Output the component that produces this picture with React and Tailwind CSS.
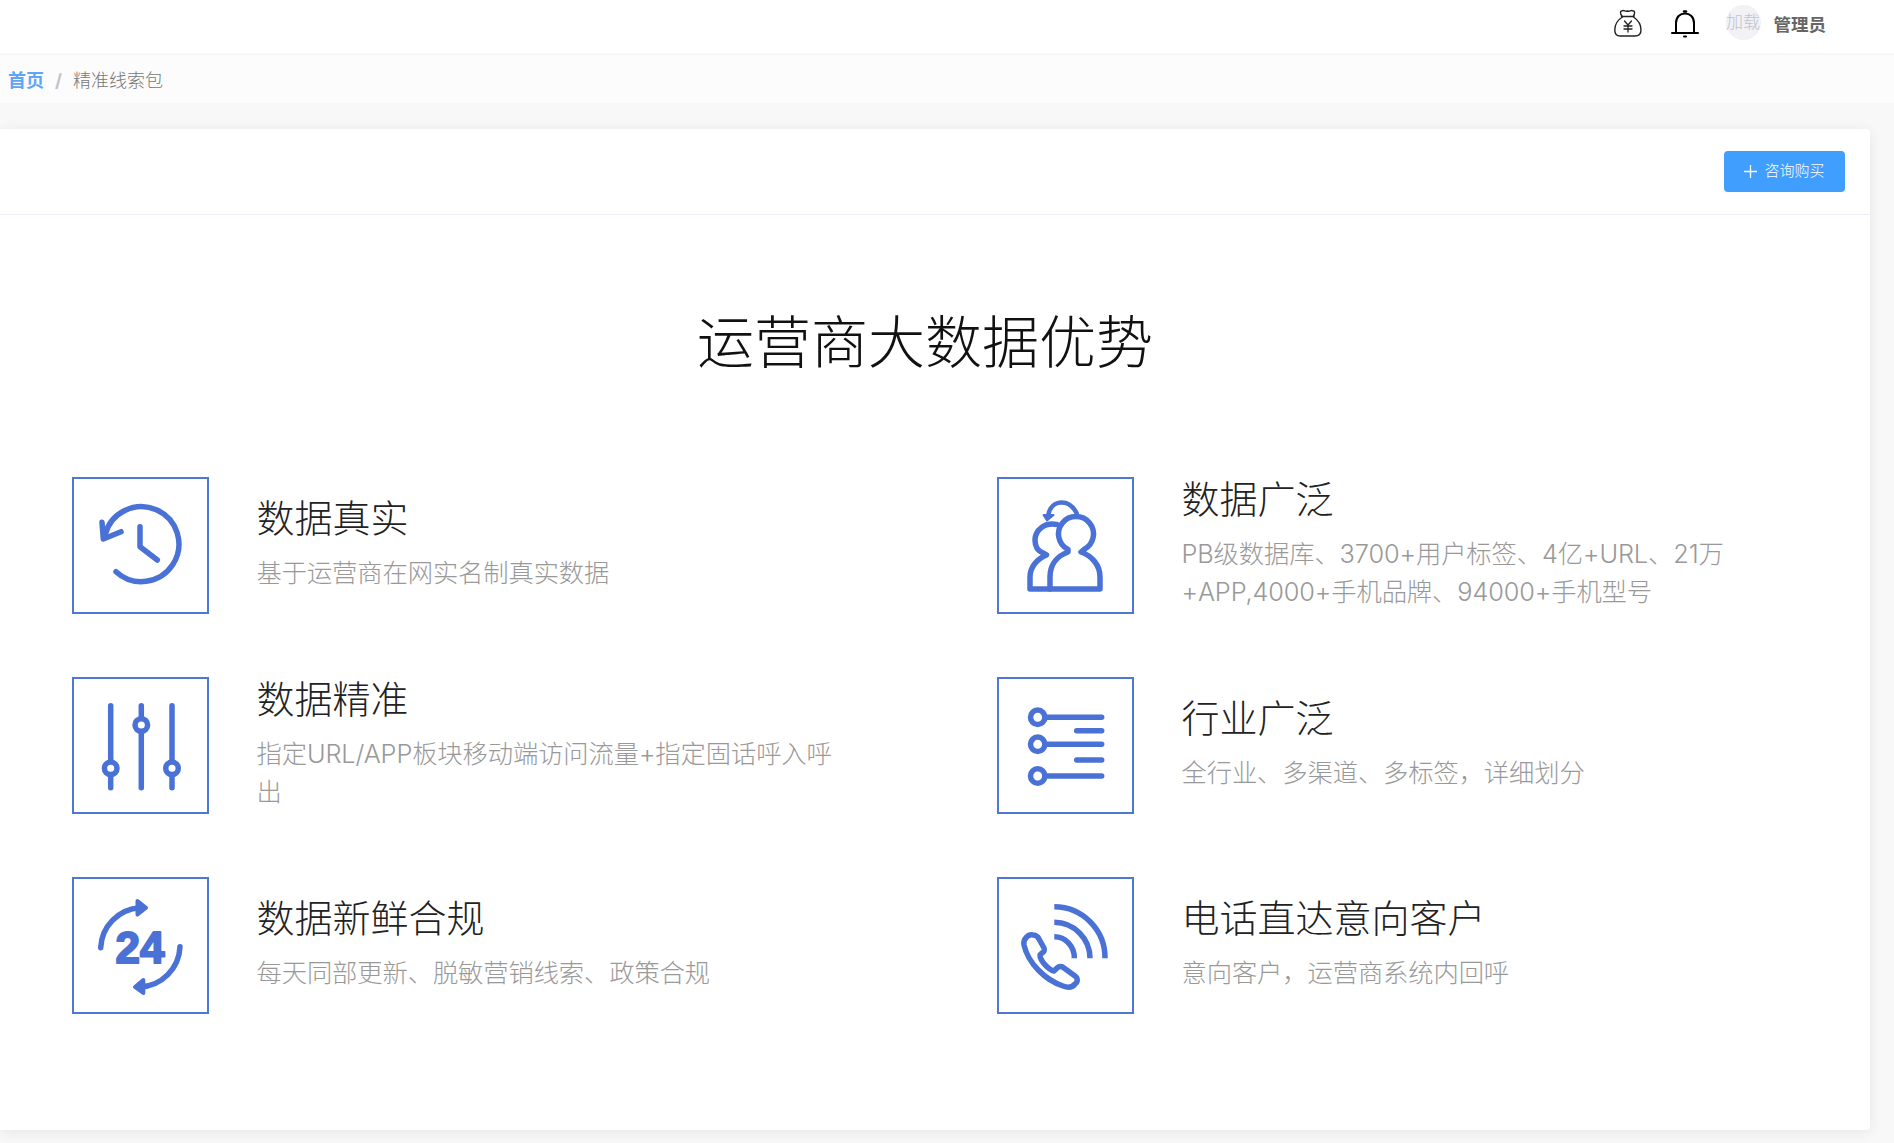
function Box({ children }) {
  return (
    <div className="w-[137px] h-[137px] shrink-0 border-2 border-[#4f77d6] bg-white">
      <svg viewBox="2 2 133 133" className="w-[133px] h-[133px]" fill="none" stroke="#4a72d6" strokeWidth="5" strokeLinecap="round" strokeLinejoin="round">
        {children}
      </svg>
    </div>
  );
}
const Clock = () => (
  <Box>
    <path d="M44 94.7A37.5 37.5 0 1 0 33 58" strokeWidth="5.5" />
    <path d="M30 45.3L31.3 62L49 54.7" strokeWidth="5.5" />
    <path d="M68 49.7V69.7L85.3 83" strokeWidth="5.5" />
  </Box>
);
const Sliders = () => (
  <Box>
    <g strokeWidth="5.5">
      <path d="M38.7 28.7V110.7M69.3 28.7V110.7M100 28.7V110.7" />
      <circle cx="38.7" cy="91.3" r="6.3" fill="#fff" />
      <circle cx="69.3" cy="48" r="6.3" fill="#fff" />
      <circle cx="100" cy="91.3" r="6.3" fill="#fff" />
    </g>
  </Box>
);
const Clock24 = () => (
  <Box>
    <path d="M28.7 70.7A42 42 0 0 1 68 30.7" strokeWidth="5.5" />
    <path d="M65.5 24L74 30.7L65.5 37.5Z" fill="#4a72d6" strokeWidth="4" />
    <path d="M108 69.7A42 42 0 0 1 68 110" strokeWidth="5.5" />
    <path d="M71.3 103L63 110L71.3 116Z" fill="#4a72d6" strokeWidth="4" />
    <text x="68" y="86" textAnchor="middle" fontFamily="'Liberation Sans', sans-serif" fontWeight="700" fontSize="44" fill="#4a72d6" strokeWidth="2">24</text>
  </Box>
);
const People = () => (
  <Box>
    <path d="M71 72.5A17.5 17.5 0 1 1 87 72.5L84 75C95 79 103 88 103 100V112H53V100C53 88 60 79 71 75Z" strokeWidth="5.5" />
    <path d="M59.7 47.5C47 45 38 54 38 63C38 69 41 74 46 76L49.5 78C40 82 33 90 33 100V112H53" strokeWidth="5.5" />
    <path d="M79.7 36.3C76 29 70 25.5 64.7 25.5C58 25.5 53 30 51.5 37" strokeWidth="4.5" />
    <path d="M46.5 38H56.5L50 43.5Z" fill="#4a72d6" strokeWidth="2" />
  </Box>
);
const List = () => (
  <Box>
    <g strokeWidth="5.5">
      <circle cx="40.7" cy="40.3" r="7.2" />
      <circle cx="40.7" cy="67.3" r="7.2" />
      <circle cx="40.7" cy="99" r="7.2" />
      <path d="M48 40.3H104.7M79.7 53.7H104.7M48 67.3H104.7M79.7 83H104.7M48 99H104.7" />
    </g>
  </Box>
);
const Phone = () => (
  <Box>
    <g strokeWidth="5.5" strokeLinecap="butt">
      <path d="M57.3 29.7A51 51 0 0 1 108 81.3" />
      <path d="M57.3 45.3A36 36 0 0 1 93 81.3" />
      <path d="M57.3 59.7A20 21 0 0 1 77.3 81.3" />
    </g>
    <path d="M27 68C26 62 31 57 36 58C39 58 41 60 42 62L47 71C48 73 47 75 45 76L43 78C43 84 52 93 57 94L60 91C62 89 65 89 67 91L78 99C81 101 81 105 78 107C75 111 71 111 66 109C48 103 31 86 27 68Z" strokeWidth="5.5" />
  </Box>
);
function Feature({ icon, title, desc }) {
  return (
    <div className="flex items-center gap-[47.5px] h-[137px]">
      {icon}
      <div className="w-[590px] -mt-[6px]">
        <div className="text-[38px] leading-[50px] font-light text-[#222]">{title}</div>
        <div className="mt-[11px] text-[25.3px] leading-[38px] font-light tracking-[-0.1px] text-[#999]">{desc}</div>
      </div>
    </div>
  );
}
const items = [
  [<Clock />, "数据真实", "基于运营商在网实名制真实数据"],
  [<People />, "数据广泛", "PB级数据库、3700+用户标签、4亿+URL、21万+APP,4000+手机品牌、94000+手机型号"],
  [<Sliders />, "数据精准", "指定URL/APP板块移动端访问流量+指定固话呼入呼出"],
  [<List />, "行业广泛", "全行业、多渠道、多标签，详细划分"],
  [<Clock24 />, "数据新鲜合规", "每天同部更新、脱敏营销线索、政策合规"],
  [<Phone />, "电话直达意向客户", "意向客户，运营商系统内回呼"],
];
export default function App() {
  return (
    <div className="w-[1894px] h-[1143px] overflow-hidden bg-[#f8f8f8] font-['Inter','Noto_Sans_CJK_SC',sans-serif]">
      <header className="h-[55px] bg-white border-b-2 border-[#f6f6f6] flex items-center justify-end">
        <svg viewBox="0 0 28 28" className="w-[28px] h-[28px] mr-[29px] -mt-[7px]" fill="none" stroke="#222" strokeWidth="1.4" strokeLinejoin="round" strokeLinecap="round">
          <path d="M8 7C6 5 6 1.5 8 2C10 0.5 11 3 13.5 2C16 3 17 0.5 19 2C21 1.5 21 5 19.5 7" />
          <path d="M7.5 7.5H20" />
          <path d="M8.5 8C3.5 11 0.8 16 0.8 21C0.8 25 3 27 6 27H21C24.5 27 27 25 27 21C27 16 24 11 19.5 8" />
          <path d="M10.5 12L14 16L17.5 12M14 16V23M10 17H18M10 20H18" strokeWidth="1.3" />
        </svg>
        <svg viewBox="0 0 28 28" className="w-[28px] h-[28px] mr-[27px] -mt-[5px]" fill="none" stroke="#000" strokeWidth="2" strokeLinecap="round">
          <path d="M5 23V13C5 7 9 3.5 14 3.5C19 3.5 23 7 23 13V23" />
          <path d="M1 23H27" />
          <path d="M13 1.5H15" strokeWidth="2.5" />
          <path d="M13 26.5H15" strokeWidth="2" />
        </svg>
        <div className="w-[35px] h-[35px] -mt-[8px] rounded-full bg-[#f1f1f6] flex items-center justify-center text-[17px] text-[#c0c4cc] whitespace-nowrap font-light">加载</div>
        <div className="ml-[13px] mr-[68px] -mt-[3px] text-[17.5px] font-bold text-[#666]">管理员</div>
      </header>
      <nav className="h-[48px] bg-[#fcfcfc] flex items-center pl-[8px] text-[18px] pt-[2px]">
        <span className="font-bold text-[#5fa5f5]">首页</span>
        <span className="mx-[11px] text-[#c0c4cc] font-bold">/</span>
        <span className="text-[#777] font-light">精准线索包</span>
      </nav>
      <main className="w-[1870px] h-[1001px] mt-[26px] bg-white rounded-r-[4px] shadow-[0_2px_14px_rgba(0,0,0,0.08)]">
        <div className="h-[86px] border-b border-[#ebeef5] flex items-center justify-end pr-[25px]">
          <button className="w-[121px] h-[41px] rounded-[4px] bg-[#409eff] text-white text-[15px] flex items-center justify-center font-light">
            <svg viewBox="0 0 14 14" className="w-[13px] h-[13px] mr-[7px]" stroke="#fff" strokeWidth="1.4"><path d="M7 0V14M0 7H14" /></svg>
            咨询购买
          </button>
        </div>
        <h1 className="text-center text-[57px] leading-[80px] font-light text-[#111] mt-[88px] pr-[20px]">运营商大数据优势</h1>
        <div className="grid grid-cols-[925px_1fr] gap-y-[63px] pl-[72px] mt-[94px]">
          {items.map(([icon, t, d]) => (
            <Feature key={t} icon={icon} title={t} desc={d} />
          ))}
        </div>
      </main>
    </div>
  );
}
